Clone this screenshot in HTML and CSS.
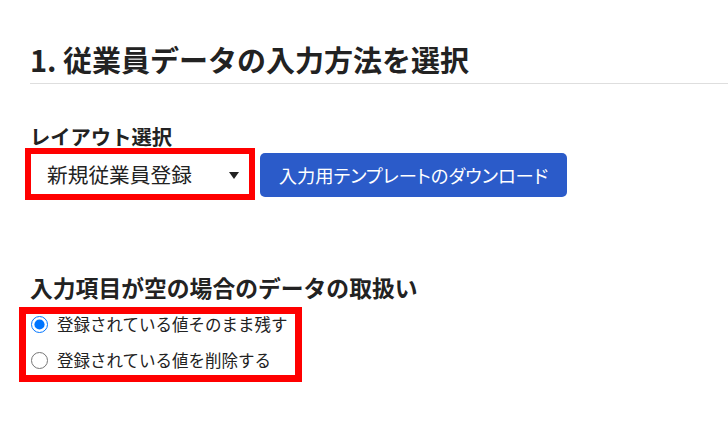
FILE: index.html
```html
<!DOCTYPE html>
<html lang="ja">
<head>
<meta charset="utf-8">
<title>従業員データの入力方法を選択</title>
<link rel="stylesheet" href="styles.css">
</head>
<body>
<div class="page">
  <h1 class="section-title">1. 従業員データの入力方法を選択</h1>

  <div class="field-label">レイアウト選択</div>
  <div class="layout-row">
    <div class="select-box">
      <span class="select-text">新規従業員登録</span>
      <span class="select-arrow"></span>
    </div>
    <button class="download-btn" type="button">入力用テンプレートのダウンロード</button>
  </div>

  <div class="sub-title">入力項目が空の場合のデータの取扱い</div>
  <div class="radio-box">
    <label class="radio-row">
      <input type="radio" name="empty" class="radio" checked>
      <span class="radio-text">登録されている値そのまま残す</span>
    </label>
    <label class="radio-row">
      <input type="radio" name="empty" class="radio">
      <span class="radio-text">登録されている値を削除する</span>
    </label>
  </div>
</div>
</body>
</html>
```

FILE: styles.css
```css
html, body {
  margin: 0;
  padding: 0;
  background: #ffffff;
}

body {
  font-family: "Noto Sans CJK JP", "Noto Sans", sans-serif;
  color: #222222;
}

.page {
  padding-left: 30px;
}

.section-title {
  margin: 0;
  padding: 41px 0 6px 0;
  font-size: 29px;
  line-height: 36px;
  font-weight: 700;
  color: #222222;
  border-bottom: 1px solid #dedede;
}

.field-label {
  margin-top: 40px;
  font-size: 20.3px;
  line-height: 24px;
  font-weight: 700;
  color: #222222;
}

.layout-row {
  display: flex;
  align-items: center;
}

.select-box {
  box-sizing: border-box;
  width: 230px;
  height: 52px;
  margin-left: -5px;
  border: 6px solid #ff0000;
  background: #ffffff;
  display: flex;
  align-items: center;
  justify-content: space-between;
  padding: 0 10px 0 16px;
}

.select-text {
  font-size: 20.7px;
  line-height: 28px;
  color: #222222;
}

.select-arrow {
  width: 0;
  height: 0;
  border-left: 5px solid transparent;
  border-right: 5px solid transparent;
  border-top: 7px solid #222222;
  margin-top: 2px;
}

.download-btn {
  box-sizing: border-box;
  margin-left: 5px;
  width: 307px;
  height: 44px;
  border: none;
  border-radius: 5px;
  background: #2b5bc9;
  color: #ffffff;
  font-family: "Noto Sans CJK JP", "Noto Sans", sans-serif;
  font-size: 18.3px;
  line-height: 28px;
  font-feature-settings: "palt";
  white-space: nowrap;
  padding: 0;
  margin-top: 2px;
}

.sub-title {
  margin-top: 73px;
  font-size: 22.8px;
  line-height: 30px;
  font-weight: 700;
  color: #222222;
}

.radio-box {
  box-sizing: border-box;
  margin-top: 4px;
  margin-left: -11px;
  width: 283px;
  border: 7px solid #ff0000;
  padding: 0 0 5px 5px;
  display: flex;
  flex-direction: column;
  gap: 16px;
}

.radio-row {
  display: flex;
  align-items: center;
  height: 20px;
}

.radio {
  width: 17px;
  height: 17px;
  margin: 0 9px 0 0;
  accent-color: #0075ff;
}

.radio-text {
  font-size: 16.5px;
  line-height: 20px;
  color: #222222;
  white-space: nowrap;
}
```
